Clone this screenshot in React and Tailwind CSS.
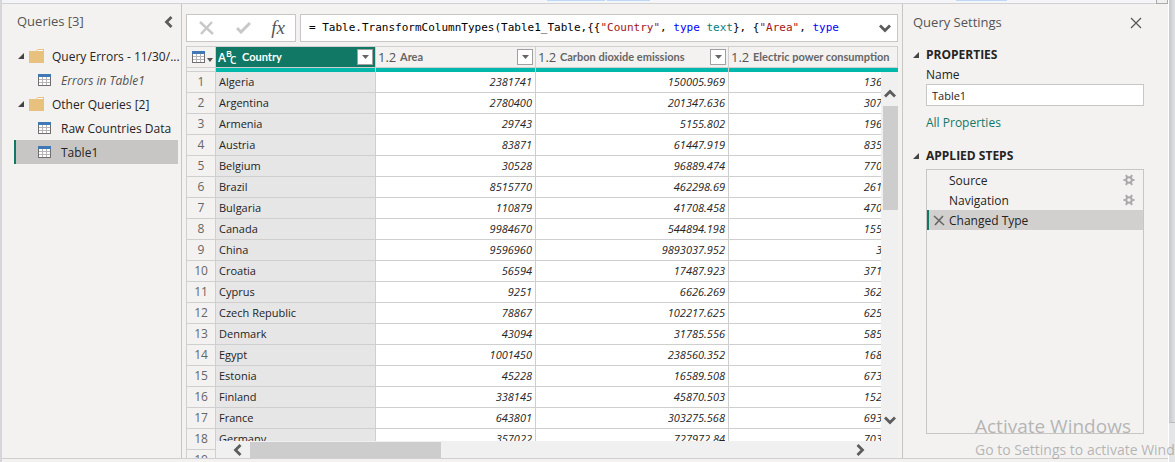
import React, { useState } from 'react';

const countries = [
  ['Algeria', '2381741', '150005.969', '136'],
  ['Argentina', '2780400', '201347.636', '307'],
  ['Armenia', '29743', '5155.802', '196'],
  ['Austria', '83871', '61447.919', '835'],
  ['Belgium', '30528', '96889.474', '770'],
  ['Brazil', '8515770', '462298.69', '261'],
  ['Bulgaria', '110879', '41708.458', '470'],
  ['Canada', '9984670', '544894.198', '155'],
  ['China', '9596960', '9893037.952', '3'],
  ['Croatia', '56594', '17487.923', '371'],
  ['Cyprus', '9251', '6626.269', '362'],
  ['Czech Republic', '78867', '102217.625', '625'],
  ['Denmark', '43094', '31785.556', '585'],
  ['Egypt', '1001450', '238560.352', '168'],
  ['Estonia', '45228', '16589.508', '673'],
  ['Finland', '338145', '45870.503', '152'],
  ['France', '643801', '303275.568', '693'],
  ['Germany', '357022', '727972.84', '703'],
  ['', '', '', ''],
];

const steps = [
  { name: 'Source', settings: true },
  { name: 'Navigation', settings: true },
  { name: 'Changed Type', settings: false },
];

const TableIcon = () => (
  <svg width="13" height="12" viewBox="0 0 13 12" shapeRendering="crispEdges" className="shrink-0">
    <rect x="0" y="0" width="13" height="12" fill="#6f6f6f" />
    <rect x="0" y="0" width="13" height="3" fill="#3f78b5" />
    <path
      fill="#fff"
      d="M1 3h3v2H1zM5 3h3v2H5zM9 3h3v2H9zM1 6h3v2H1zM5 6h3v2H5zM9 6h3v2H9zM1 9h3v2H1zM5 9h3v2H5zM9 9h3v2H9z"
    />
    <path fill="#b5b5b5" d="M4 3h1v8H4zM8 3h1v8H8zM1 5h11v1H1zM1 8h11v1H1z" />
  </svg>
);

const FolderIcon = () => (
  <svg width="15" height="14" viewBox="0 0 15 14" className="shrink-0">
    <path d="M0 2h7l2-2h6v14H0z" fill="#e9c17f" />
    <path d="M9 1h5v1H8.200z" fill="#fff" />
  </svg>
);

const Triangle = () => (
  <svg width="6" height="6" viewBox="0 0 6 6" className="shrink-0">
    <path d="M6 0v6H0z" fill="#444" />
  </svg>
);

const Chevron = ({ d, className = '' }) => (
  <svg width="12" height="12" viewBox="0 0 12 12" fill="none" stroke="#5c5c5c" strokeWidth="2.800" className={className}>
    <path d={d} />
  </svg>
);

const GearIcon = () => (
  <svg width="12" height="12" viewBox="0 0 12 12" fill="none" stroke="#a9a9a9">
    <circle cx="6" cy="6" r="2.800" strokeWidth="2" />
    <path d="M.5 6h2M9.500 6h2M3 1l1.300 2.600M9 1L7.700 3.600M3 11l1.300-2.600M9 11L7.700 8.400" strokeWidth="2" />
  </svg>
);

const AbcIcon = () => (
  <svg width="20" height="20" viewBox="0 0 20 20" fill="#fff" className="shrink-0 font-['Open_Sans',sans-serif]">
    <text x="0" y="15" fontSize="12" fontWeight="600">A</text>
    <text x="8" y="10" fontSize="9" fontWeight="600">B</text>
    <text x="12" y="17" fontSize="10" fontWeight="600">C</text>
  </svg>
);

const FilterButton = ({ label }) => (
  <button type="button" aria-label={label} className="ml-auto mr-0.5 flex size-4 shrink-0 items-center justify-center border border-[#a0a0a0] bg-white">
    <svg width="7" height="4" viewBox="0 0 7 4">
      <path d="M0 0h7L3.500 4z" fill="#666" />
    </svg>
  </button>
);

const NumberHeader = ({ title, filter }) => (
  <th scope="col" className="h-[21px] overflow-hidden border-r border-b border-[#cfcfcf] bg-[#f3f2f1] p-0 font-normal">
    <div className="flex items-center pl-0.5 whitespace-nowrap">
      <span className="w-[22px] shrink-0 text-left text-[13px] leading-5 text-[#555]">1.2</span>
      <span className="font-['Lato','Open_Sans',sans-serif] text-[11px] leading-5 font-bold text-[#666]">{title}</span>
      {filter && <FilterButton label={`Filter ${title}`} />}
    </div>
  </th>
);

const QueryItem = ({ name, italic, selected, onClick }) => (
  <li>
    <button
      type="button"
      onClick={onClick}
      className={`flex h-6 w-full items-center gap-2.5 border-l-2 pl-[22px] text-left ${
        selected ? 'border-[#117865] bg-[#c8c6c4]' : 'border-transparent'
      } ${italic ? 'text-[#555] italic' : ''}`}
    >
      <TableIcon />
      <span className="pt-0.5">{name}</span>
    </button>
  </li>
);

const FolderRow = ({ children }) => (
  <button type="button" className="flex h-6 w-full items-center pl-1 text-left whitespace-nowrap">
    <Triangle />
    <span className="mr-2 ml-[5px]"><FolderIcon /></span>
    <span className="pt-0.5">{children}</span>
  </button>
);

const QueriesPane = () => {
  const [selected, setSelected] = useState('Table1');

  return (
    <nav className="w-[180px] shrink-0 border-r border-[#c8c6c4] pr-[3px] pl-3">
      <div className="flex h-10 items-center justify-between pr-1 pb-1 pl-[3px]">
        <h2 className="text-[13px] text-[#555]">Queries [3]</h2>
        <button type="button" aria-label="Collapse queries">
          <Chevron d="M9.500 1L4.500 6l5 5" />
        </button>
      </div>
      <FolderRow>Query Errors - 11/30/...</FolderRow>
      <ul>
        <QueryItem name="Errors in Table1" italic selected={selected === 'Errors'} onClick={() => setSelected('Errors')} />
      </ul>
      <FolderRow>Other Queries [2]</FolderRow>
      <ul>
        <QueryItem name="Raw Countries Data" selected={selected === 'Raw'} onClick={() => setSelected('Raw')} />
        <QueryItem name="Table1" selected={selected === 'Table1'} onClick={() => setSelected('Table1')} />
      </ul>
    </nav>
  );
};

const FormulaBar = () => (
  <div className="flex h-7 shrink-0 gap-1">
    <div className="flex w-[110px] shrink-0 items-center justify-between border border-[#c8c6c4] bg-white pr-2.5 pl-3">
      <button type="button" aria-label="Cancel">
        <svg width="16" height="14" viewBox="0 0 16 14" fill="none" stroke="#c8c8c8" strokeWidth="2.400">
          <path d="M1 1l13 12M13 1L2 13" />
        </svg>
      </button>
      <button type="button" aria-label="Apply">
        <svg width="15" height="12" viewBox="0 0 15 12" fill="none" stroke="#c8c8c8" strokeWidth="3">
          <path d="M1 6l4 4 9-9" />
        </svg>
      </button>
      <button type="button" aria-label="Insert step" className="font-['Liberation_Serif',serif] text-[19px] leading-5 text-[#555] italic">
        fx
      </button>
    </div>
    <div className="flex min-w-0 flex-1 items-center justify-between border border-[#c8c6c4] bg-white pr-1.5 pl-2">
      <code className="overflow-hidden font-['DejaVu_Sans_Mono',monospace] text-[11px] whitespace-pre text-black">
        {'= Table.TransformColumnTypes(Table1_Table,{{'}
        <span className="text-[#a31515]">"Country"</span>
        {', '}
        <span className="text-[#0000ff]">type</span> <span className="text-[#008080]">text</span>
        {'}, {'}
        <span className="text-[#a31515]">"Area"</span>
        {', '}
        <span className="text-[#0000ff]">type</span>
      </code>
      <button type="button" aria-label="Expand formula">
        <Chevron d="M1 3.500l5 5 5-5" />
      </button>
    </div>
  </div>
);

const DataGrid = () => (
  <div className="relative mt-1 min-h-0 flex-1 overflow-hidden border-t border-l border-[#cfcfcf]">
    <table className="w-full table-fixed border-separate border-spacing-0 text-[11px] leading-5">
      <colgroup>
        <col className="w-[29px]" />
        <col className="w-[160px]" />
        <col className="w-[160px]" />
        <col className="w-[193px]" />
        <col />
      </colgroup>
      <thead>
        <tr>
          <th scope="col" className="border-r border-b border-[#cfcfcf] p-0">
            <button type="button" aria-label="Table menu" className="flex h-5 items-center gap-0.5 pl-[5px]">
              <TableIcon />
              <svg width="6" height="4" viewBox="0 0 6 4" className="mt-1.5">
                <path d="M0 0h6L3 4z" fill="#555" />
              </svg>
            </button>
          </th>
          <th scope="col" className="h-[21px] border-r border-b border-[#cfcfcf] bg-[#117865] p-0">
            <div className="flex items-center gap-1 pl-0.5">
              <AbcIcon />
              <span className="font-['Lato','Open_Sans',sans-serif] font-bold text-white">Country</span>
              <FilterButton label="Filter Country" />
            </div>
          </th>
          <NumberHeader title="Area" filter />
          <NumberHeader title="Carbon dioxide emissions" filter />
          <NumberHeader title="Electric power consumption" />
        </tr>
        <tr>
          <td className="h-1 border-r border-b border-[#cfcfcf] p-0"></td>
          <td className="h-1 border-r border-[#cfcfcf] bg-[#01b8aa] p-0"></td>
          <td className="h-1 border-r border-[#cfcfcf] bg-[#01b8aa] p-0"></td>
          <td className="h-1 border-r border-[#cfcfcf] bg-[#01b8aa] p-0"></td>
          <td className="h-1 bg-[#01b8aa] p-0"></td>
        </tr>
      </thead>
      <tbody>
        {countries.map(([country, area, emissions, power], i) => (
          <tr key={i}>
            <th scope="row" className="h-[21px] border-r border-b border-[#cfcfcf] p-0 text-center text-xs leading-5 font-normal text-[#666]">
              {i + 1}
            </th>
            <td className="border-r border-b border-[#cfcfcf] bg-[#e6e6e6] p-0 pl-[3px]">{country}</td>
            <td className="border-r border-b border-[#cfcfcf] bg-white p-0 pr-[3px] text-right italic">{area}</td>
            <td className="border-r border-b border-[#cfcfcf] bg-white p-0 pr-[3px] text-right italic">{emissions}</td>
            <td className="border-b border-[#cfcfcf] bg-white p-0 pr-4 text-right italic">{power}</td>
          </tr>
        ))}
      </tbody>
    </table>

    {/* scrollbars */}
    <div className="absolute top-[25px] right-0 bottom-4 flex w-[17px] flex-col items-center bg-[#f0f0f0] pt-4 pb-4">
      <Chevron d="M1 8.500l5-5 5 5" />
      <div className="mt-1.5 h-[104px] w-[15px] self-end bg-[#cdcdcd]"></div>
      <Chevron d="M1 3.500l5 5 5-5" className="mt-auto" />
    </div>
    <div className="absolute right-0 bottom-0 left-[29px] flex h-[17px] items-center bg-[#f0f0f0] pr-8 pl-4">
      <Chevron d="M8.500 1L3.500 6l5 5" />
      <div className="ml-1.5 h-4 w-[191px] bg-[#cdcdcd]"></div>
      <Chevron d="M3.500 1l5 5-5 5" className="ml-auto" />
    </div>
  </div>
);

const SettingsPane = () => {
  const [name, setName] = useState('Table1');
  const [current, setCurrent] = useState('Changed Type');

  return (
    <aside className="flex w-[266px] shrink-0 flex-col border-l border-[#c8c6c4] pr-6 pb-6 pl-2.5">
      <div className="flex h-[41px] shrink-0 items-center justify-between pb-1">
        <h2 className="text-[13px] text-[#555]">Query Settings</h2>
        <button type="button" aria-label="Close" className="mr-0.5">
          <svg width="12" height="12" viewBox="0 0 12 12" fill="none" stroke="#555" strokeWidth="1.200">
            <path d="M1 1l10 10M11 1L1 11" />
          </svg>
        </button>
      </div>
      <h3 className="flex h-5 shrink-0 items-center gap-[7px] font-bold">
        <Triangle />
        PROPERTIES
      </h3>
      <div className="flex flex-col items-start pl-[13px]">
        <label htmlFor="query-name" className="h-[19px] leading-5">Name</label>
        <input
          id="query-name"
          value={name}
          onChange={(e) => setName(e.target.value)}
          className="h-[22px] w-full border border-[#c8c6c4] bg-white px-[5px] text-[11px] outline-none"
        />
        <a href="#properties" className="mt-[7px] leading-5 text-[#117865]">All Properties</a>
      </div>
      <h3 className="mt-[13px] flex h-5 shrink-0 items-center gap-[7px] font-bold">
        <Triangle />
        APPLIED STEPS
      </h3>
      <ul className="mt-[3px] ml-[13px] flex-1 border border-[#c8c6c4]">
        {steps.map((step) => (
          <li
            key={step.name}
            className={`flex h-5 items-center border-l-2 pr-2 pl-1 ${
              current === step.name ? 'border-[#117865] bg-[#d2d0ce]' : 'border-transparent'
            }`}
          >
            <span className="w-4 shrink-0">
              {current === step.name && (
                <svg width="12" height="11" viewBox="0 0 12 11" fill="none" stroke="#666" strokeWidth="1.600">
                  <path d="M1 1l10 9M10 1L2 10" />
                </svg>
              )}
            </span>
            <button type="button" onClick={() => setCurrent(step.name)} className="flex-1 pt-0.5 text-left leading-[18px]">
              {step.name}
            </button>
            {step.settings && (
              <button type="button" aria-label={`Edit ${step.name}`}>
                <GearIcon />
              </button>
            )}
          </li>
        ))}
      </ul>
    </aside>
  );
};

export default function App() {
  return (
    <div className="relative flex h-screen overflow-hidden bg-[#f3f2f1] font-['Open_Sans','Noto_Sans',sans-serif] text-xs text-[#252423]">
      <div className="flex min-w-0 flex-1 flex-col border-r border-l-2 border-r-white border-l-[#d6d6d8]">
        {/* bottom edge of the ribbon */}
        <div className="flex h-1 shrink-0 items-start justify-end border-b border-[#d2d2d2] bg-[#f3f5f8]">
          <div className="mr-0.5 h-px w-[58px] bg-[#bcd8f5]"></div>
          <div className="mr-[306px] h-px w-[43px] bg-[#bcd8f5]"></div>
          <div className="mr-[149px] h-px w-[51px] bg-[#bcd8f5]"></div>
          <div className="h-1 w-3 border-x border-b border-[#aaa] bg-[#f0f0f0]"></div>
        </div>
        <div className="flex min-h-0 flex-1 border-b border-[#cfcfcf]">
          <QueriesPane />
          <main className="flex min-w-0 flex-1 flex-col px-1 pt-2.5">
            <FormulaBar />
            <DataGrid />
          </main>
          <SettingsPane />
        </div>
        <div className="h-[3px] shrink-0"></div>
      </div>
      <div className="flex w-1.5 shrink-0 flex-col bg-linear-to-r from-[#c6c8cc] to-[#dfe1e4]">
        <div className="mt-auto h-10 border-t border-[#bbb] bg-[#e4e5e7]"></div>
      </div>

      {/* system watermark */}
      <div className="pointer-events-none absolute right-0 bottom-0 w-[200px] overflow-hidden whitespace-nowrap text-[#8a8a8a]/60">
        <p className="text-[19px] leading-6">Activate Windows</p>
        <p className="text-sm leading-6">Go to Settings to activate Windows.</p>
      </div>
    </div>
  );
}
